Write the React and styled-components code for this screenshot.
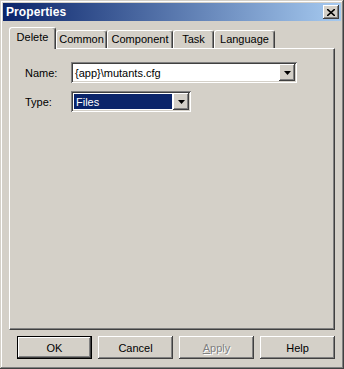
import React from 'react';
import styled, { createGlobalStyle, css } from 'styled-components';

const GlobalStyle = createGlobalStyle`
  html, body {
    margin: 0;
    padding: 0;
    background: #d4d0c8;
  }
  * {
    box-sizing: border-box;
  }
`;

const raised = css`
  box-shadow:
    inset -1px -1px 0 #404040,
    inset 1px 1px 0 #ffffff,
    inset -2px -2px 0 #808080,
    inset 2px 2px 0 #d4d0c8;
`;

const sunken = css`
  box-shadow:
    inset 1px 1px 0 #808080,
    inset -1px -1px 0 #ffffff,
    inset 2px 2px 0 #404040,
    inset -2px -2px 0 #d4d0c8;
`;

const Window = styled.div`
  width: 344px;
  height: 369px;
  padding: 3px;
  display: flex;
  flex-direction: column;
  background: #d4d0c8;
  font-family: "Liberation Sans", Arial, sans-serif;
  font-size: 11px;
  color: #000;
  box-shadow:
    inset -1px -1px 0 #404040,
    inset 1px 1px 0 #d4d0c8,
    inset -2px -2px 0 #808080,
    inset 2px 2px 0 #ffffff;
`;

const TitleBar = styled.div`
  height: 18px;
  display: flex;
  align-items: center;
  justify-content: space-between;
  padding: 0 2px 0 3px;
  background: linear-gradient(to right, #0a246a, #a6caf0);
`;

const Title = styled.span`
  color: #fff;
  font-weight: bold;
  font-size: 12px;
  letter-spacing: 0.1px;
`;

const CloseButton = styled.div`
  width: 16px;
  height: 14px;
  background: #d4d0c8;
  display: flex;
  align-items: center;
  justify-content: center;
  ${raised}
`;

const Body = styled.div`
  flex: 1;
  display: flex;
  flex-direction: column;
  padding: 6px 6px 7px;
`;

const TabStrip = styled.div`
  height: 21px;
  display: flex;
  align-items: flex-end;
  position: relative;
  z-index: 1;
`;

const Tab = styled.div`
  width: ${p => p.$w}px;
  height: ${p => (p.$active ? 22 : 18)}px;
  margin-bottom: ${p => (p.$active ? -1 : 0)}px;
  padding-top: ${p => (p.$active ? 3 : 2)}px;
  text-align: center;
  background: #d4d0c8;
  border-radius: 3px 3px 0 0;
  border-top: 1px solid #fff;
  border-left: 1px solid #fff;
  border-right: 1px solid #404040;
  box-shadow: inset -1px 0 0 #808080;
  white-space: nowrap;
`;

const Panel = styled.div`
  height: 282px;
  padding: 13px 15px;
  display: flex;
  flex-direction: column;
  gap: 8px;
  border-top: 1px solid #fff;
  border-left: 1px solid #fff;
  border-right: 1px solid #404040;
  border-bottom: 1px solid #404040;
  box-shadow: inset -1px -1px 0 #808080;
`;

const Row = styled.div`
  display: flex;
  align-items: center;
  height: 21px;
`;

const Label = styled.span`
  width: 46px;
`;

const Combo = styled.div`
  width: ${p => p.$w}px;
  height: 21px;
  padding: 2px;
  display: flex;
  background: #fff;
  ${sunken}
`;

const ComboText = styled.div`
  flex: 1;
  display: flex;
  align-items: center;
  padding-left: 2px;
  ${p =>
    p.$selected &&
    css`
      background: #0a246a;
      color: #fff;
      margin: 1px 1px 1px 1px;
    `}
`;

const DropButton = styled.div`
  width: 16px;
  height: 17px;
  background: #d4d0c8;
  display: flex;
  align-items: center;
  justify-content: center;
  ${raised}
`;

const ButtonRow = styled.div`
  margin-top: 6px;
  display: flex;
  justify-content: flex-end;
  gap: 6px;
`;

const Button = styled.div`
  width: 75px;
  height: 23px;
  display: flex;
  align-items: center;
  justify-content: center;
  background: #d4d0c8;
  ${raised}
  ${p =>
    p.$default &&
    css`
      box-shadow:
        inset 0 0 0 1px #000,
        inset -2px -2px 0 #404040,
        inset 2px 2px 0 #ffffff,
        inset -3px -3px 0 #808080;
    `}
  ${p =>
    p.$disabled &&
    css`
      color: #808080;
      text-shadow: 1px 1px 0 #fff;
    `}
`;

function Arrow() {
  return (
    <svg width="7" height="4" viewBox="0 0 7 4">
      <path d="M0 0h7L3.5 4z" fill="#000" />
    </svg>
  );
}

const tabs = [
  { label: 'Delete', w: 47, active: true },
  { label: 'Common', w: 51 },
  { label: 'Component', w: 66 },
  { label: 'Task', w: 41 },
  { label: 'Language', w: 61 },
];

export default function App() {
  return (
    <>
      <GlobalStyle />
      <Window>
        <TitleBar>
          <Title>Properties</Title>
          <CloseButton>
            <svg width="8" height="7" viewBox="0 0 8 7">
              <path d="M0 0l8 7M8 0L0 7" stroke="#000" strokeWidth="1.6" />
            </svg>
          </CloseButton>
        </TitleBar>
        <Body>
          <TabStrip>
            {tabs.map(t => (
              <Tab key={t.label} $w={t.w} $active={t.active}>
                {t.label}
              </Tab>
            ))}
          </TabStrip>
          <Panel>
            <Row>
              <Label>Name:</Label>
              <Combo $w={226}>
                <ComboText>{'{app}\\mutants.cfg'}</ComboText>
                <DropButton>
                  <Arrow />
                </DropButton>
              </Combo>
            </Row>
            <Row>
              <Label>Type:</Label>
              <Combo $w={120}>
                <ComboText $selected>Files</ComboText>
                <DropButton>
                  <Arrow />
                </DropButton>
              </Combo>
            </Row>
          </Panel>
          <ButtonRow>
            <Button $default>OK</Button>
            <Button>Cancel</Button>
            <Button $disabled>
              <span><u>A</u>pply</span>
            </Button>
            <Button>Help</Button>
          </ButtonRow>
        </Body>
      </Window>
    </>
  );
}
